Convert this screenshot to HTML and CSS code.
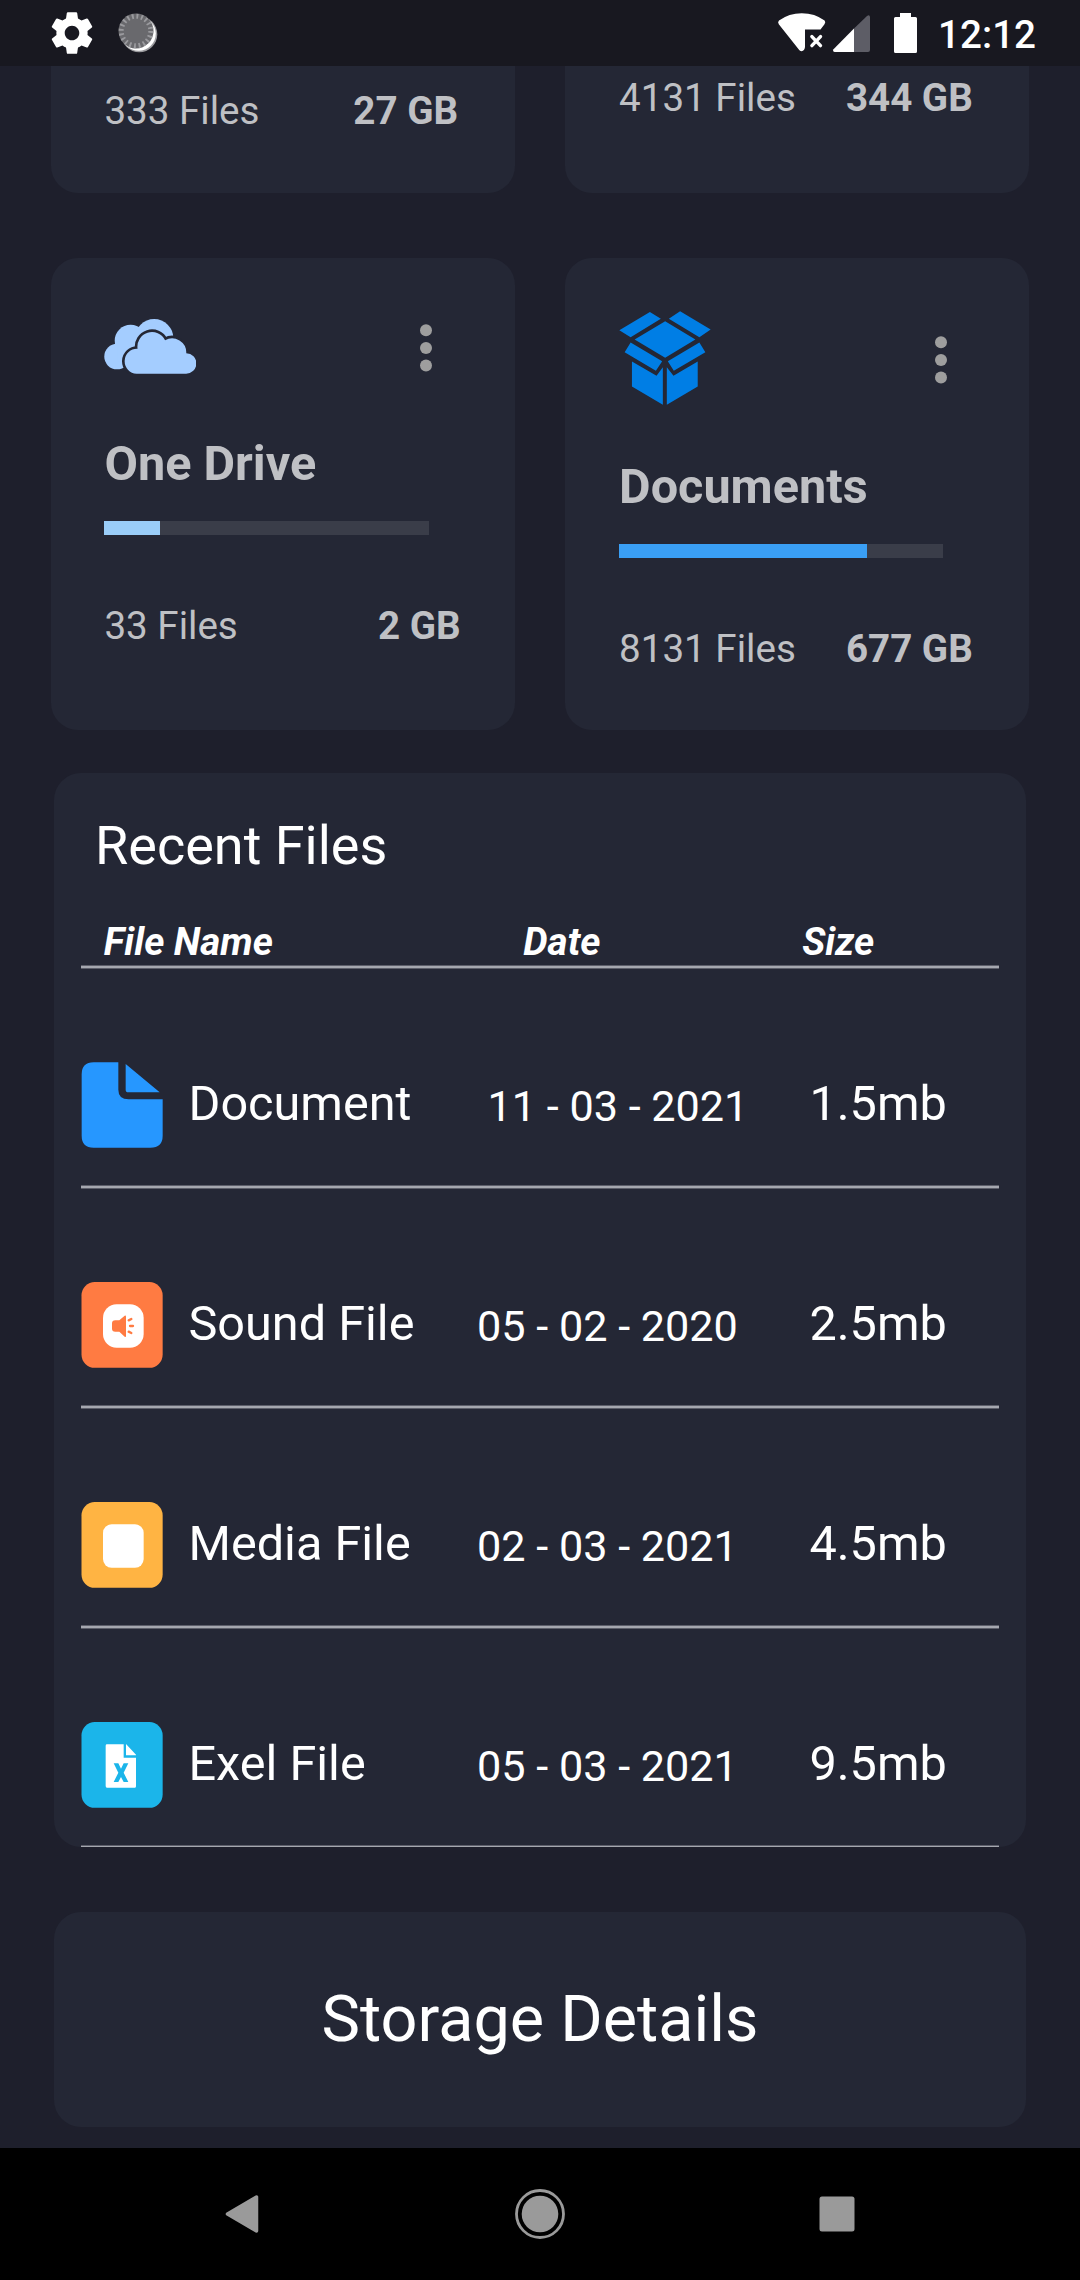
FILE: index.html
```html
<!DOCTYPE html>
<html lang="en">
<head>
<meta charset="utf-8">
<title>File Manager</title>
<link rel="stylesheet" href="styles.css">
</head>
<body>
<div class="screen">
  <header class="status-bar">
    <svg class="status-gear" viewBox="0 0 24 24"><path d="M19.43 12.98c.04-.32.07-.64.07-.98s-.03-.66-.07-.98l2.11-1.65c.19-.15.24-.42.12-.64l-2-3.46c-.12-.22-.39-.3-.61-.22l-2.49 1c-.52-.4-1.08-.73-1.69-.98l-.38-2.65C14.46 2.18 14.25 2 14 2h-4c-.25 0-.46.18-.49.42l-.38 2.65c-.61.25-1.17.59-1.69.98l-2.49-1c-.23-.09-.49 0-.61.22l-2 3.46c-.13.22-.07.49.12.64l2.11 1.65c-.04.32-.07.65-.07.98s.03.66.07.98l-2.11 1.65c-.19.15-.24.42-.12.64l2 3.46c.12.22.39.3.61.22l2.49-1c.52.4 1.08.73 1.69.98l.38 2.65c.03.24.24.42.49.42h4c.25 0 .46-.18.49-.42l.38-2.65c.61-.25 1.17-.59 1.69-.98l2.49 1c.23.09.49 0 .61-.22l2-3.46c.12-.22.07-.49-.12-.64l-2.11-1.65zM12 15.5c-1.93 0-3.5-1.57-3.5-3.5s1.57-3.5 3.5-3.5 3.5 1.57 3.5 3.5-1.57 3.5-3.5 3.5z"/></svg>
    <svg class="status-sync" viewBox="116 10 44 44">
      <circle cx="139.3" cy="34.3" r="18" fill="#9a9a9e"/>
      <circle cx="138.6" cy="33.6" r="17.2" fill="#fff"/>
      <circle cx="136" cy="31" r="17.5" fill="#69696d"/>
      <circle cx="136" cy="31" r="14.8" fill="none" stroke="#9a9a9e" stroke-width="5" stroke-dasharray="1.9 2.75"/>
    </svg>
    <div class="status-right">
      <svg class="status-icons" viewBox="776 0 144 66">
        <path fill="#fff" d="M779 20.5Q789 13.2 801.7 13.2Q815 13.2 824.6 20.6Q826 22.3 824.5 24.3L820.5 29.5H805V47Q804.5 51 801.6 51.2Q799.8 51 798.8 49.5L778.8 24.3Q777.3 22.2 779 20.5Z"/>
        <path d="M811.9 36.6l8.6 9M820.5 36.6l-8.6 9" stroke="#fff" stroke-width="3.4" stroke-linecap="round"/>
        <path fill="#5d5d66" d="M854 28.5L867 16Q869.6 14 870 17V50Q870 52 868 52H854Z"/>
        <path fill="#fff" d="M854 28.5V52H834.8Q832.2 51.5 833.5 49.2Z"/>
        <path fill="#fff" d="M900 13h11v4h4.5q1.5 0 1.5 1.5v33q0 1.5-1.5 1.5h-20q-1.5 0-1.5-1.5v-33q0-1.5 1.5-1.5h4.5z"/>
      </svg>
      <span class="clock">12:12</span>
    </div>
  </header>

  <main class="content">
    <section class="storage-grid">
      <article class="card card-cut">
        <div class="usage"><span>333 Files</span><b class="size-inset">27 GB</b></div>
      </article>
      <article class="card card-cut card-cut-high">
        <div class="usage"><span>4131 Files</span><b class="size-inset">344 GB</b></div>
      </article>

      <article class="card">
        <div class="card-top">
          <svg class="icon-cloud" viewBox="192 237 277 166">
            <g fill="#a4cdff"><circle cx="231" cy="350.5" r="38.5"/><circle cx="272" cy="302.5" r="48"/><circle cx="343" cy="295" r="58"/><path d="M231 312h60v60h-40l-20-10z"/></g>
            <path fill="#a4cdff" stroke="#242735" stroke-width="16" paint-order="stroke" d="M290 402A37.5 37.5 0 0 1 293 327A44 44 0 0 1 376 301A43 43 0 0 1 440 340A31 31 0 0 1 439 402Z"/>
          </svg>
          <svg class="dots" viewBox="0 0 12 48"><circle cx="6" cy="6.3" r="6"/><circle cx="6" cy="24" r="6"/><circle cx="6" cy="41.6" r="6"/></svg>
        </div>
        <h2>One Drive</h2>
        <div class="bar"><div class="bar-fill fill-light" style="width:17%"></div></div>
        <div class="usage"><span>33 Files</span><b>2 GB</b></div>
      </article>

      <article class="card">
        <div class="card-top card-top-tall">
          <svg class="icon-box" viewBox="207 213 277 283" fill="#007ee5"><path d="M300 216l33 20-91 56-34-21zM391 214l92 55-34 23-92-56zM346 244l91 55-91 55-92-55zM242 308l95 56-19 29-94-56zM449 308l18 29-95 56-18-29zM246 365l74 43 19-26v113l-93-55zM444 365v75l-93 55V382l20 26z"/></svg>
          <svg class="dots" viewBox="0 0 12 48"><circle cx="6" cy="6.3" r="6"/><circle cx="6" cy="24" r="6"/><circle cx="6" cy="41.6" r="6"/></svg>
        </div>
        <h2>Documents</h2>
        <div class="bar"><div class="bar-fill fill-blue" style="width:76.5%"></div></div>
        <div class="usage"><span>8131 Files</span><b class="size-inset">677 GB</b></div>
      </article>
    </section>

    <section class="panel recent">
      <h1>Recent Files</h1>
      <div class="table-head"><span>File Name</span><span>Date</span><span>Size</span></div>
      <div class="rule"></div>

      <div class="file-row">
        <svg class="file-icon" viewBox="123 905 246 258" fill="#2697ff"><path d="M161 906H235V988Q235 1017 266 1017H368V1126Q368 1162 331 1162H161Q125 1162 125 1126V942Q125 906 161 906ZM257 911L359 996H265Q257 996 257 988Z"/></svg>
        <span class="file-name">Document</span><span class="file-date date-shift">11 - 03 - 2021</span><span class="file-size">1.5mb</span>
      </div>
      <div class="rule"></div>

      <div class="file-row">
        <svg class="file-icon" viewBox="63 126 246 258"><rect x="64.5" y="126" width="243.5" height="257.5" rx="40" fill="#ff7b42"/><rect x="129" y="193" width="122" height="130" rx="41" fill="#fff"/><path fill="#ff7b42" d="M166 241H178L194 227Q198 225 198 230V288Q198 292 194 290L178 275H166Q156 275 156 266V250Q156 241 166 241Z"/><path d="M206 241l8-4M210 258h9M206 275l8 4" stroke="#ff7b42" stroke-width="7" stroke-linecap="round"/></svg>
        <span class="file-name">Sound File</span><span class="file-date">05 - 02 - 2020</span><span class="file-size">2.5mb</span>
      </div>
      <div class="rule"></div>

      <div class="file-row">
        <svg class="file-icon" viewBox="63 786 246 258"><rect x="64.5" y="786" width="243.5" height="257.5" rx="40" fill="#ffb443"/><rect x="129" y="853" width="122" height="130" rx="26" fill="#fff"/></svg>
        <span class="file-name">Media File</span><span class="file-date">02 - 03 - 2021</span><span class="file-size">4.5mb</span>
      </div>
      <div class="rule"></div>

      <div class="file-row">
        <svg class="file-icon" viewBox="63 186 246 258"><rect x="64.5" y="186" width="243.5" height="257.5" rx="40" fill="#1bb5ea"/><path fill="#fff" d="M141 253H191V293H228V379Q228 383 225 383H141Q137 383 137 378V257Q137 253 141 253ZM198 252L228 284V286H198Z"/><path fill="#1bb5ea" d="M161 310h14l8 16 8-16h14l-14 28 14 28h-14l-8-15-8 15h-14l14-28z"/></svg>
        <span class="file-name">Exel File</span><span class="file-date">05 - 03 - 2021</span><span class="file-size">9.5mb</span>
      </div>
      <div class="rule"></div>
    </section>

    <section class="panel details">Storage Details</section>
  </main>

  <nav class="nav-bar">
    <svg width="50" height="52" viewBox="-25 -26 50 52"><path d="M-14.5 0L14.5 -17V17Z" fill="#9a9a9a" stroke="#9a9a9a" stroke-width="3.5" stroke-linejoin="round"/></svg>
    <svg width="50" height="52" viewBox="-25 -26 50 52"><circle r="18.3" fill="#9a9a9a"/><circle r="23.5" fill="none" stroke="#9a9a9a" stroke-width="2.8"/></svg>
    <svg width="50" height="52" viewBox="-25 -26 50 52"><rect x="-17.5" y="-17.5" width="35" height="35" rx="2.5" fill="#9a9a9a"/></svg>
  </nav>
</div>
</body>
</html>
```
FILE: styles.css
```css
* { box-sizing: border-box; margin: 0; padding: 0; }

body {
  background: #1e1f2c;
  color: #fff;
  font-family: Roboto, "Liberation Sans", sans-serif;
}

svg { display: block; flex: none; }

.screen {
  width: 1080px;
  height: 2280px;
  display: flex;
  flex-direction: column;
  overflow: hidden;
}

/* Status bar */
.status-bar {
  height: 66px;
  flex: none;
  display: flex;
  align-items: center;
  background: #181820;
  padding: 0 44px 0 47px;
}
.status-gear { width: 50px; height: 50px; fill: #fff; }
.status-sync { width: 44px; height: 44px; margin: 0 0 2px 19px; }
.status-right { display: flex; align-items: center; margin-left: auto; }
.status-icons { width: 144px; height: 66px; }
.clock {
  margin-left: 18.3px;
  padding-top: 4px;
  font-size: 38.6px;
  font-weight: 500;
  line-height: 46px;
}

/* Storage cards */
.content { flex: 1; min-height: 0; }

.storage-grid {
  display: grid;
  grid-template-columns: 464px 464px;
  column-gap: 50.7px;
  row-gap: 65px;
  padding-left: 50.6px;
}
.card {
  height: 472px;
  padding: 54px 54px 0 53.8px;
  border-radius: 27px;
  background: #242735;
  color: #bfc0c4;
}
.card-cut {
  height: 127px;
  padding-top: 22px;
  border-radius: 0 0 27px 27px;
}
.card-cut-high { padding-top: 8.5px; }
.card-top {
  height: 72px;
  display: flex;
  align-items: center;
  justify-content: space-between;
}
.card-top-tall { height: 95px; }
.icon-cloud { width: 92px; height: 55px; margin-bottom: 3px; }
.icon-box { width: 92px; height: 94px; margin-bottom: 3px; }
.dots { width: 12px; height: 48px; margin-right: 28.2px; fill: #9e9e9e; }
.card h2 {
  margin-top: 52px;
  font-size: 48.6px;
  font-weight: 700;
  line-height: 56px;
}
.bar {
  width: 324.3px;
  height: 14px;
  margin: 29px 0 67.5px;
  background: #3a3d49;
}
.bar-fill { height: 100%; }
.fill-light { background: #9acdf8; }
.fill-blue { background: #3a9ff5; }
.usage {
  display: flex;
  justify-content: space-between;
  font-size: 38.6px;
  line-height: 46px;
}
.size-inset { margin-right: 2.5px; }

/* Panels */
.panel {
  width: 972px;
  margin-left: 54px;
  border-radius: 27px;
  background: #242735;
}
.recent {
  height: 1074px;
  margin-top: 43px;
  padding: 40.5px 27px 0;
  overflow: hidden;
}
.recent h1 {
  padding-left: 14px;
  font-size: 54px;
  font-weight: 400;
  line-height: 64px;
}
.table-head {
  display: grid;
  grid-template-columns: 419.5px 279px 1fr;
  height: 46px;
  margin-top: 41px;
  padding-left: 22.8px;
  font-size: 38.6px;
  font-style: italic;
  font-weight: 700;
  line-height: 46px;
}
.rule {
  height: 4px;
  background: #a5a7af;
  border: solid #5c5e6a;
  border-width: 1px 0;
}
.file-row {
  height: 216px;
  display: grid;
  grid-template-columns: 107.5px 288.5px 332.5px 1fr;
  align-items: center;
  padding: 93px 0 37px;
}
.file-icon { width: 82px; height: 86px; }
.file-name, .file-size {
  padding-bottom: 2px;
  font-size: 48.6px;
  line-height: 56px;
}
.file-date {
  padding-top: 4px;
  font-size: 43.2px;
  line-height: 50px;
  white-space: nowrap;
}
.date-shift { padding-left: 10.5px; }

.details {
  height: 215px;
  margin-top: 65px;
  padding-bottom: 2px;
  display: flex;
  align-items: center;
  justify-content: center;
  font-size: 64.8px;
  line-height: 76px;
}

/* System navigation */
.nav-bar {
  height: 132px;
  flex: none;
  display: grid;
  grid-template-columns: repeat(3, 297.5px);
  align-items: center;
  justify-items: center;
  padding-left: 93.5px;
  background: #000;
}
```
